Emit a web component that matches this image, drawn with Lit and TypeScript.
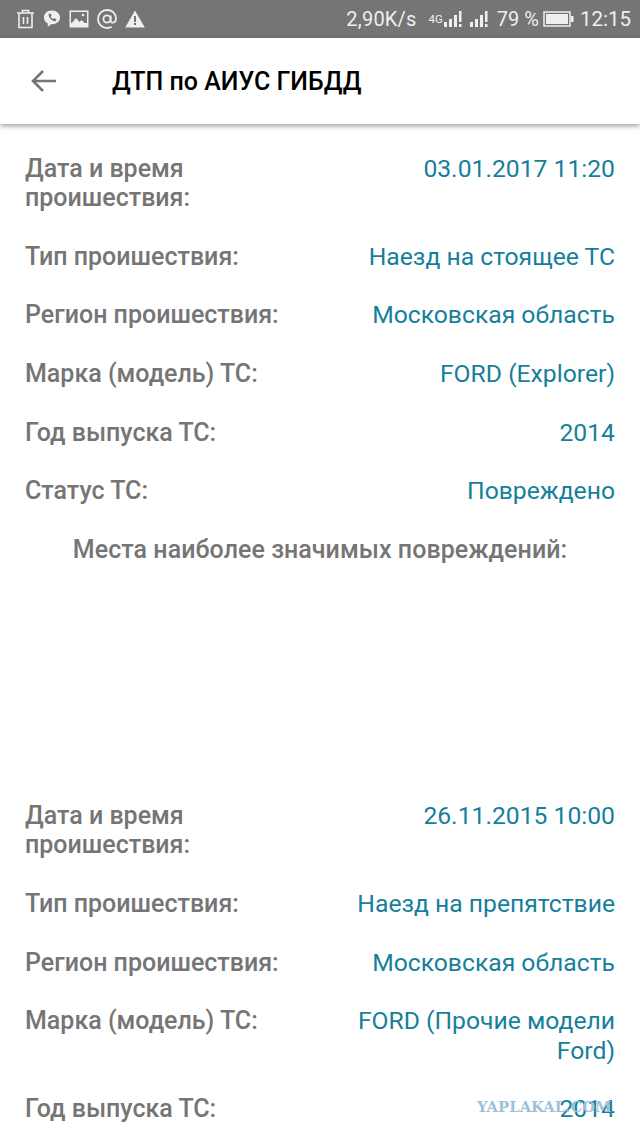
import { LitElement, html, css, svg } from "lit";
import { customElement } from "lit/decorators.js";

type Row = { label: string; value: string };
const first: Row[] = [
  { label: "Дата и время проишествия:", value: "03.01.2017 11:20" },
  { label: "Тип проишествия:", value: "Наезд на стоящее ТС" },
  { label: "Регион проишествия:", value: "Московская область" },
  { label: "Марка (модель) ТС:", value: "FORD (Explorer)" },
  { label: "Год выпуска ТС:", value: "2014" },
  { label: "Статус ТС:", value: "Повреждено" },
];
const second: Row[] = [
  { label: "Дата и время проишествия:", value: "26.11.2015 10:00" },
  { label: "Тип проишествия:", value: "Наезд на препятствие" },
  { label: "Регион проишествия:", value: "Московская область" },
  { label: "Марка (модель) ТС:", value: "FORD (Прочие модели Ford)" },
  { label: "Год выпуска ТС:", value: "2014" },
];

@customElement("app-root")
export class AppRoot extends LitElement {
  static styles = css`
    :host {
      display: block;
      position: relative;
      height: 1138px;
      overflow: hidden;
      background: #fff;
      font-family: Roboto, "Liberation Sans", sans-serif;
    }
    .status {
      height: 38px;
      background: #757575;
      display: flex;
      align-items: center;
      padding: 0 9px 0 16px;
      color: #efefef;
      font-size: 20px;
    }
    .left { display: flex; align-items: center; gap: 8px; }
    .right { margin-left: auto; display: flex; align-items: center; }
    .speed { margin-right: 12px; letter-spacing: 0.2px; }
    .g4 { font-size: 11.500px; }
    .pct { margin: 0 4px 0 8px; }
    .time { margin-left: 6px; font-size: 20.500px; }
    .gap { width: 6px; }
    svg { display: block; }
    .bar {
      height: 86px;
      display: flex;
      align-items: center;
      background: #fff;
      box-shadow: 0 2px 5px rgba(0, 0, 0, 0.38);
      position: relative;
    }
    .back { margin-left: 30px; }
    .title {
      margin-left: 55px;
      padding-top: 1px;
      font-size: 25px;
      font-weight: 500;
      color: #000;
    }
    .content { padding: 29.500px 25px 0; }
    .row {
      display: flex;
      justify-content: space-between;
      font-size: 24.700px;
      line-height: 29.500px;
      margin-bottom: 29.200px;
    }
    .label {
      font-size: 25px;
      font-weight: 500;
      color: #757575;
      width: 210px;
      flex: none;
    }
    .label.wide { width: 290px; }
    .value { color: #167f9b; text-align: right; flex: 1; }
    .heading {
      font-size: 25px;
      line-height: 29.500px;
      font-weight: 500;
      color: #757575;
      letter-spacing: 0.05px;
      text-align: center;
      margin-bottom: 236px;
    }
    .mark {
      position: absolute;
      left: 477px;
      top: 1098px;
      font-family: "DejaVu Serif", serif;
      font-weight: 700;
      font-size: 14.800px;
      line-height: 18px;
      color: #9cc2d9;
      white-space: nowrap;
    }
  `;

  private row(r: Row) {
    const wide = r.label.length < 24;
    return html`<div class="row">
      <div class="label ${wide ? "wide" : ""}">${r.label}</div>
      <div class="value">${r.value}</div>
    </div>`;
  }

  private signal() {
    return svg`<svg width="20" height="20" viewBox="0 0 20 20" fill="#efefef">
      <rect x="1" y="13" width="3" height="5"/>
      <rect x="6" y="10" width="3" height="8"/>
      <rect x="11" y="6" width="3" height="12"/>
      <rect x="16" y="2" width="2.500" height="11"/>
      <rect x="16" y="15" width="2.500" height="3"/>
    </svg>`;
  }

  render() {
    return html`
      <div class="status">
        <div class="left">
          <svg width="19" height="20" viewBox="0 0 19 20" fill="none" stroke="#efefef" stroke-width="1.600">
            <path d="M1 4h17M6.500 4V1.500h6V4M3 4v14.500h13V4M7.500 8v7M11.500 8v7"/>
          </svg>
          <svg width="18" height="20" viewBox="0 0 19 20">
            <path fill="#efefef" d="M9.500 1C4.500 1 1 4 1 8.500c0 3 1.300 5 4 6.200v3.800l3.500-3c.4 0 .7 0 1 0 5 0 8.500-3 8.500-7S14.500 1 9.500 1z"/>
            <path fill="#757575" d="M6 4.500l2 -.3 1.200 2.300-1 1c.5 1.200 1.300 2 2.500 2.500l1-1 2.300 1.200-.3 2c-4 .7-8.500-3.700-7.700-7.700z"/>
          </svg>
          <svg width="20" height="18" viewBox="0 0 20 18">
            <rect x="0.500" y="0.500" width="19" height="17" fill="#efefef"/>
            <rect x="2" y="2" width="16" height="11" fill="#757575"/>
            <path fill="#efefef" d="M2 14l5-6 3.500 4 2-2 5.500 5H2z"/>
            <circle cx="14" cy="5" r="1.300" fill="#efefef"/>
          </svg>
          <svg class="at" width="20" height="20" viewBox="0 0 20 20" fill="none" stroke="#efefef" stroke-width="1.800">
            <circle cx="10" cy="10" r="3.600"/>
            <path d="M13.600 6.500v5c0 3 4.900 3 5.300-1C19.300 5 15.500 1 10 1a9 9 0 0 0 0 18c2 0 3.400-.4 4.600-1.200"/>
          </svg>
          <svg width="20" height="18" viewBox="0 0 20 18">
            <path fill="#efefef" d="M10 0.500L19.800 17.500H0.200z"/>
            <rect x="9" y="6" width="2" height="6" fill="#757575"/>
            <rect x="9" y="13" width="2" height="2" fill="#757575"/>
          </svg>
        </div>
        <div class="right">
          <span class="speed">2,90K/s</span>
          <span class="g4">4G</span>
          ${this.signal()}
          <span class="gap"></span>
          ${this.signal()}
          <span class="pct">79 %</span>
          <svg width="31" height="18" viewBox="0 0 31 18">
            <rect x="1" y="2" width="26" height="14" fill="none" stroke="#efefef" stroke-width="1.500"/>
            <rect x="3" y="4" width="22" height="10" fill="#efefef"/>
            <rect x="28" y="6" width="2.500" height="6" fill="#efefef"/>
          </svg>
          <span class="time">12:15</span>
        </div>
      </div>
      <div class="bar">
        <svg class="back" width="27" height="24" viewBox="0 0 27 24" fill="none" stroke="#757575" stroke-width="2.600">
          <path d="M26 12H3M13 2L3 12l10 10"/>
        </svg>
        <div class="title">ДТП по АИУС ГИБДД</div>
      </div>
      <div class="content">
        ${first.map((r) => this.row(r))}
        <div class="heading">Места наиболее значимых повреждений:</div>
        ${second.map((r) => this.row(r))}
      </div>
      <div class="mark">YAPLAKAL.COM</div>
    `;
  }
}
